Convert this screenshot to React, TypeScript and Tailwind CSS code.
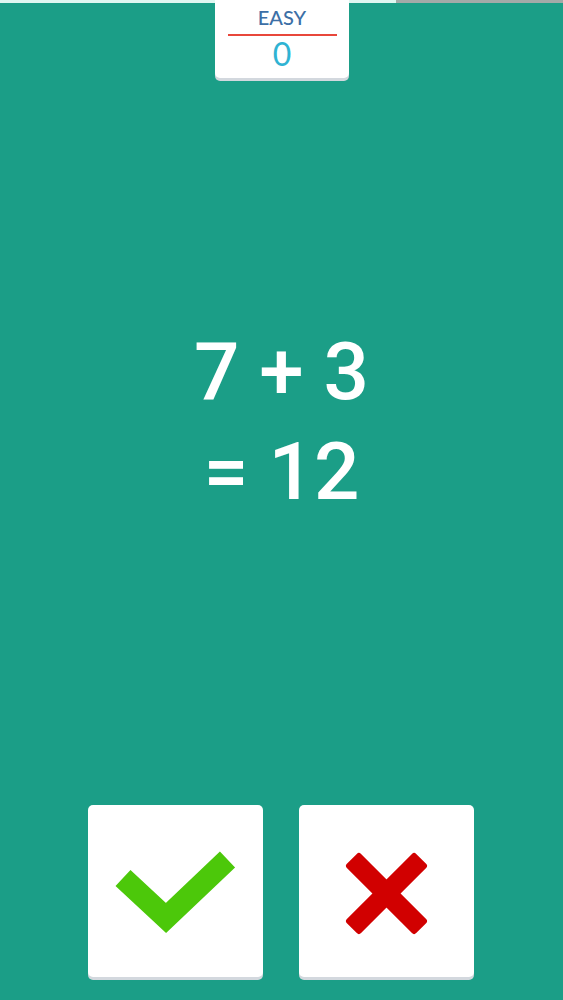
import React from "react";

export default function App() {
  return (
    <div
      className="relative w-full h-[1000px] bg-[#1b9e87] overflow-hidden flex flex-col items-center"
      style={{ fontFamily: '"Liberation Sans", Arial, sans-serif' }}
    >
      {/* progress bar */}
      <div className="absolute top-0 left-0 w-full h-[3px] flex">
        <div className="w-[396px] h-full bg-[#dff7f1]" />
        <div className="flex-1 h-full bg-[#a3aaa8]" />
      </div>

      {/* score box */}
      <div className="relative z-10 w-[134px] h-[78px] bg-white rounded-b-[5px] shadow-[0_3px_0_#d3d8de] flex flex-col items-center -mr-[1px]">
        <div
          className="mt-[7px] text-[20px] leading-[20px] text-[#3c6fa6] font-medium"
          style={{ fontFamily: 'Lato, "Open Sans", sans-serif' }}
        >
          EASY
        </div>
        <div className="mt-[7px] w-[109px] h-[2px] bg-[#e8473b]" />
        <div
          className="mt-[1px] text-[32px] leading-[34px] text-[#2fb3d3]"
          style={{ fontFamily: 'Lato, "Open Sans", sans-serif' }}
        >
          0
        </div>
      </div>

      {/* equation */}
      <div
        className="mt-[244px] flex flex-col items-center text-white text-[80px] leading-[100px] font-medium"
        style={{ fontFamily: 'Roboto, "Liberation Sans", sans-serif' }}
      >
        <div>7 + 3</div>
        <div>= 12</div>
      </div>

      {/* buttons */}
      <div className="mt-auto mb-[23px] flex gap-[36px] -ml-[1px]">
        <button className="w-[175px] h-[172px] bg-white rounded-[5px] shadow-[0_3px_0_#d3d8de] flex items-center justify-center">
          <svg width="175" height="172" viewBox="88 805 175 172">
            <polyline
              points="123,878 166,918 227.5,859.5"
              fill="none"
              stroke="#4cc80a"
              strokeWidth="22"
              strokeLinejoin="miter"
              strokeLinecap="butt"
            />
          </svg>
        </button>
        <button className="w-[175px] h-[172px] bg-white rounded-[5px] shadow-[0_3px_0_#d3d8de] flex items-center justify-center">
          <svg width="175" height="172" viewBox="299 805 175 172">
            <g fill="#d10000">
              <rect x="337.5" y="883.5" width="98" height="20" rx="3" transform="rotate(45 386.5 893.5)" />
              <rect x="337.5" y="883.5" width="98" height="20" rx="3" transform="rotate(-45 386.5 893.5)" />
            </g>
          </svg>
        </button>
      </div>
    </div>
  );
}
